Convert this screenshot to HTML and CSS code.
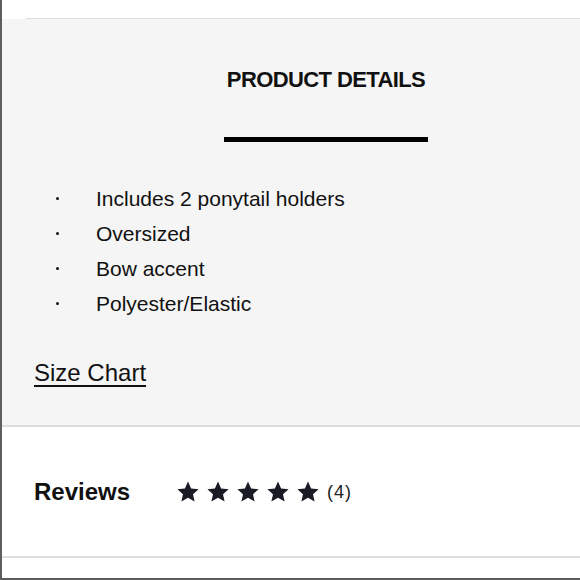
FILE: index.html
```html
<!DOCTYPE html>
<html lang="en">
<head>
<meta charset="utf-8">
<title>Product Details</title>
<link rel="stylesheet" href="styles.css">
</head>
<body>
  <div class="top-gap"></div>
  <div class="top-line"></div>
  <section class="details">
    <div class="heading">
      <h2 class="title">PRODUCT DETAILS</h2>
      <div class="title-bar"></div>
    </div>
    <ul class="features">
      <li class="feature">Includes 2 ponytail holders</li>
      <li class="feature">Oversized</li>
      <li class="feature">Bow accent</li>
      <li class="feature">Polyester/Elastic</li>
    </ul>
    <a class="size-chart" href="#">Size Chart</a>
  </section>
  <section class="reviews">
    <h3 class="reviews-title">Reviews</h3>
    <div class="stars">
      <svg class="star" viewBox="0 0 24 24"><polygon points="12,1.5 15.1,8.4 22.6,9.2 17,14.2 18.6,21.6 12,17.8 5.4,21.6 7,14.2 1.4,9.2 8.9,8.4"/></svg>
      <svg class="star" viewBox="0 0 24 24"><polygon points="12,1.5 15.1,8.4 22.6,9.2 17,14.2 18.6,21.6 12,17.8 5.4,21.6 7,14.2 1.4,9.2 8.9,8.4"/></svg>
      <svg class="star" viewBox="0 0 24 24"><polygon points="12,1.5 15.1,8.4 22.6,9.2 17,14.2 18.6,21.6 12,17.8 5.4,21.6 7,14.2 1.4,9.2 8.9,8.4"/></svg>
      <svg class="star" viewBox="0 0 24 24"><polygon points="12,1.5 15.1,8.4 22.6,9.2 17,14.2 18.6,21.6 12,17.8 5.4,21.6 7,14.2 1.4,9.2 8.9,8.4"/></svg>
      <svg class="star" viewBox="0 0 24 24"><polygon points="12,1.5 15.1,8.4 22.6,9.2 17,14.2 18.6,21.6 12,17.8 5.4,21.6 7,14.2 1.4,9.2 8.9,8.4"/></svg>
    </div>
    <span class="count">(4)</span>
  </section>
</body>
</html>
```
FILE: styles.css
```css
html, body {
  margin: 0;
  padding: 0;
}
body {
  width: 580px;
  height: 580px;
  box-sizing: border-box;
  border-left: 2px solid #5e5e5e;
  border-bottom: 2px solid #5e5e5e;
  background: #ffffff;
  font-family: "Liberation Sans", Arial, sans-serif;
  color: #111111;
  overflow: hidden;
}
.top-gap {
  height: 18px;
  background: #ffffff;
}
.top-line {
  height: 1px;
  margin-left: 24px;
  background: #dcdcdc;
}
.details {
  height: 408px;
  box-sizing: border-box;
  background: #f5f5f5;
  border-bottom: 2px solid #dcdcdc;
  padding-top: 47px;
  display: flex;
  flex-direction: column;
  align-items: flex-start;
}
.heading {
  margin-left: 222px;
  width: 204px;
  display: flex;
  flex-direction: column;
  align-items: center;
}
.title {
  margin: 0;
  font-size: 22px;
  line-height: 28px;
  font-weight: 700;
  letter-spacing: -0.6px;
  color: #111111;
  white-space: nowrap;
}
.title-bar {
  margin-top: 43px;
  width: 204px;
  height: 5px;
  background: #000000;
}
.features {
  list-style: none;
  margin: 39px 0 0 0;
  padding: 0;
}
.feature {
  display: flex;
  align-items: center;
  font-size: 21px;
  line-height: 35px;
  color: #111111;
}
.feature::before {
  content: "";
  width: 3px;
  height: 3px;
  border-radius: 50%;
  background: #111111;
  margin-left: 54px;
  margin-right: 37px;
  flex: none;
}
.size-chart {
  margin-top: 37px;
  margin-left: 32px;
  font-size: 24px;
  line-height: 30px;
  color: #111111;
  text-decoration: underline;
  text-decoration-thickness: 2px;
  text-underline-offset: 4px;
}
.reviews {
  height: 131px;
  box-sizing: border-box;
  border-bottom: 2px solid #e0e0e0;
  display: flex;
  align-items: center;
  padding-left: 32px;
}
.reviews-title {
  margin: 0;
  width: 142px;
  font-size: 24px;
  line-height: 30px;
  font-weight: 700;
  color: #111111;
}
.stars {
  display: flex;
  gap: 6px;
}
.star {
  width: 24px;
  height: 24px;
  fill: #1b1b26;
}
.count {
  margin-left: 7px;
  font-size: 18px;
  letter-spacing: 1px;
  color: #222222;
  line-height: 24px;
}
```
